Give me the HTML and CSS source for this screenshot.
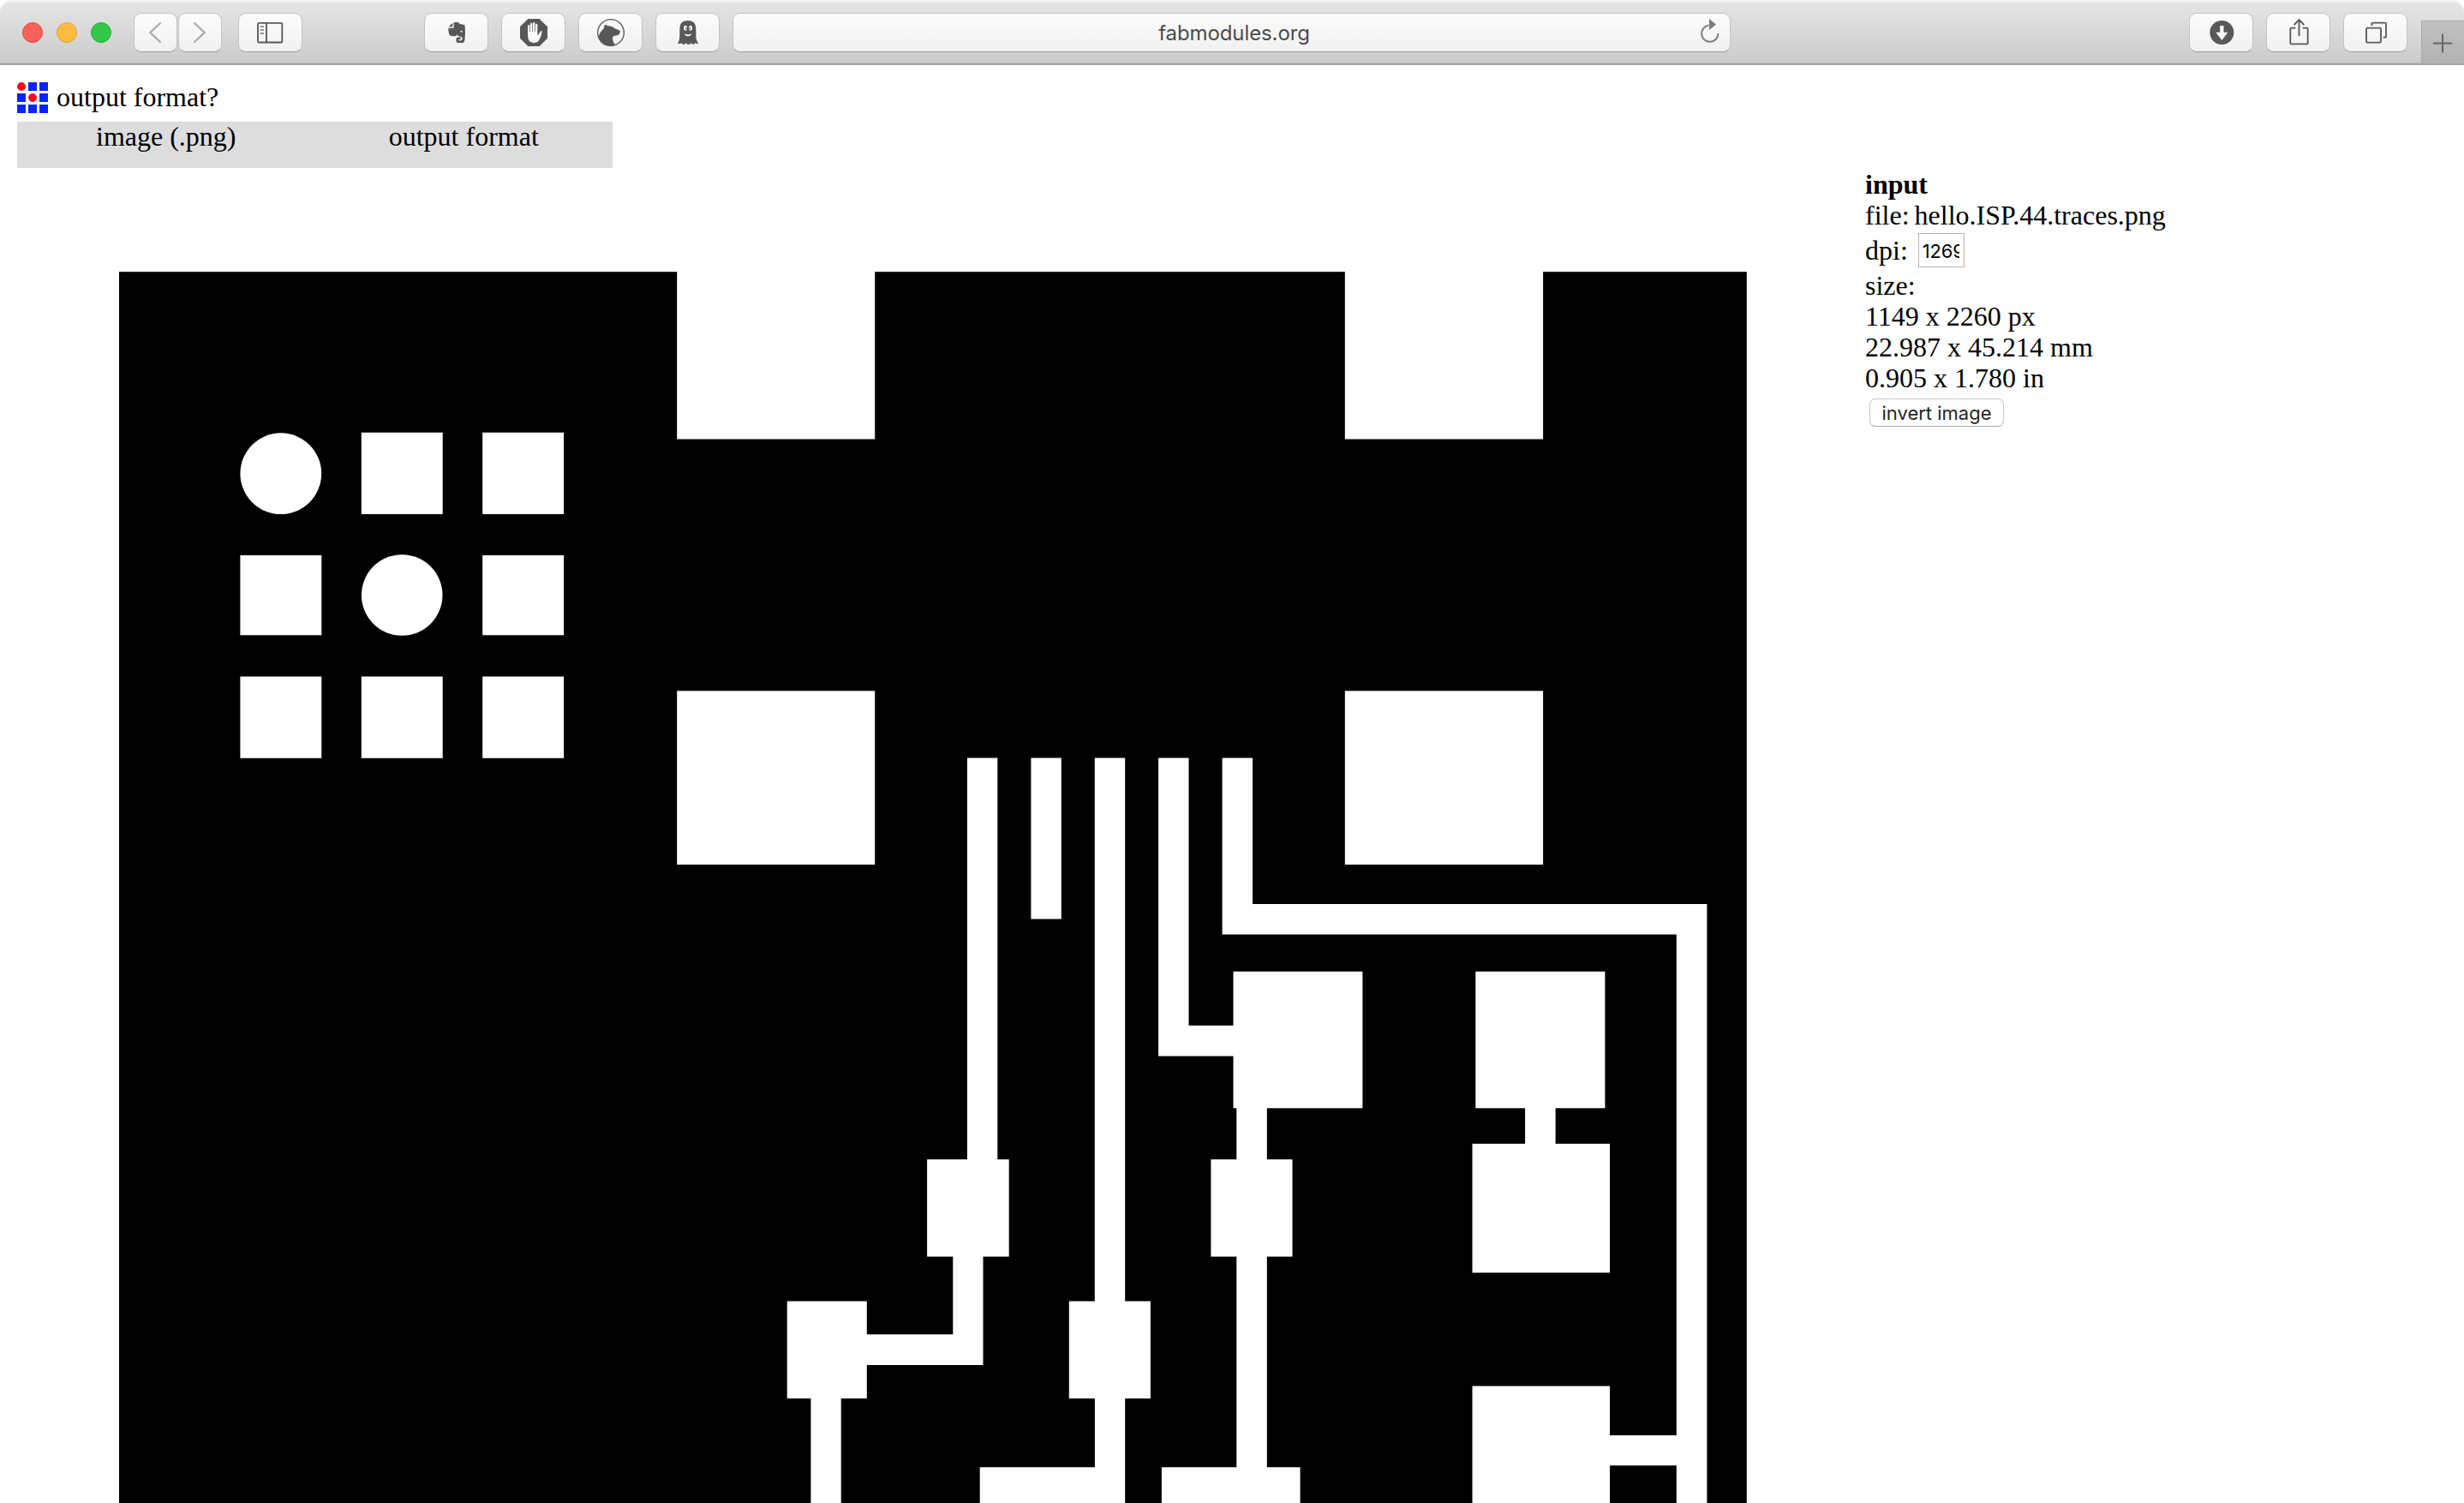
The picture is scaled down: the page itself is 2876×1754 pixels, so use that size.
FILE: index.html
```html
<!DOCTYPE html>
<html lang="en">
<head>
<meta charset="utf-8">
<title>fabmodules.org</title>
<link rel="stylesheet" href="styles.css">
</head>
<body>
<header class="toolbar">
  <div class="lights"><span class="light red"></span><span class="light yellow"></span><span class="light green"></span></div>
  <div class="nav">
    <div class="btn small"><svg viewBox="0 0 150 138"><path class="chev" d="M93 36 58 69l35 33"/></svg></div>
    <div class="btn small"><svg viewBox="0 0 150 138"><path class="chev" d="M57 36l35 33-35 33"/></svg></div>
  </div>
  <div class="btn sidebar"><svg viewBox="0 0 222 138"><g class="line"><rect x="69" y="35.500" width="85" height="68" rx="4"/><path d="M99 35v69"/><path class="thin" d="M77 48h13M77 60h13M77 72h13"/></g></svg></div>
  <div class="extensions">
    <div class="btn"><svg viewBox="0 0 222 138"><path class="fill" d="M97 35v14H83zM101 34q9-3 16 0 4 2 5 5l13 2q5 1 5 6 2 22 0 41-1 17-7 17h-13q-11 0-11-10t11-10h5v8h-5q-3 0-3 2t4 2h6q4-1 4-7 0-6-4-7l-10-2q-4-1-5-5-2 6-7 6-14 0-18-4-5-5-5-25h16q3 0 3-3z"/><path class="paper" d="M123 67q1-7 7-4l2 5q-5-2-9-1z"/></svg></div>
    <div class="btn"><svg viewBox="0 0 222 138"><path class="fill" d="M91 21h40l28 28v40l-28 28H91L63 89V49z"/><path class="paper" d="M90 72V46q0-4 3.500-4t3.500 4v20h2V39q0-4 3.500-4t3.500 4v26h2V37q0-4 3.500-4t3.500 4v28h2V42q0-4 3.500-4t3.500 4v35h3l7-12q3-4 6-1-1 10-5 20-5 14-11 18-6 3-14 3-11 0-16-8-4-8-4-25z"/></svg></div>
    <div class="btn"><svg viewBox="0 0 222 138"><circle class="ring" cx="111" cy="69" r="46"/><path class="fill" d="M67 83q6-17 19-28 2-13 6-14 5 0 8 5 14-2 24 8l19 8q2 8-3 13-7 6-17 5-7 2-6 12 3 14 9 20-18 9-38 0-17-9-21-29z"/></svg></div>
    <div class="btn"><svg viewBox="0 0 222 138"><path class="fill" d="M82 55q0-28 28.500-28T139 55v30q1 14 8 22-5 2-11-2-2 4-6 6-5-1-7-5-5 5-11 5-6-1-8-5-4 5-9 5-5-2-7-5-6 3-13 1 7-9 7-25z"/><ellipse class="paper" cx="102" cy="53" rx="6" ry="9"/><ellipse class="paper" cx="120" cy="53" rx="6" ry="9"/><path class="fill" d="M103 52h4v6h-4zM116 52h4v6h-4z"/><path class="paper" d="M98 73q13 6 26 0-3 9-13 9t-13-9z"/></svg></div>
  </div>
  <div class="address"><span>fabmodules.org</span><svg class="reload" viewBox="0 0 24 30"><path d="M10.500 7.500A9.700 9.700 0 1 0 21.500 17" /><path class="head" d="M11 0v13l8-6.500z"/></svg></div>
  <div class="actions">
    <div class="btn"><svg viewBox="0 0 222 138"><circle class="fill" cx="112" cy="69" r="42"/><path class="paper" d="M105.500 45h13v23H133l-21 28-21-28h14.500z"/></svg></div>
    <div class="btn"><svg viewBox="0 0 222 138"><path class="line" d="M100 53H85q-3 0-3 3v50q0 3 3 3h55q3 0 3-3V56q0-3-3-3h-15M112.500 81V24M95 42l17.500-18L130 42"/></svg></div>
    <div class="btn"><svg viewBox="0 0 222 138"><g class="line"><rect x="78" y="53" width="51" height="51" rx="4"/><path d="M97 45V38q0-3 3-3h44q3 0 3 3v45q0 3-3 3h-7"/></g></svg></div>
  </div>
  <div class="newtab"><svg viewBox="0 0 50 50"><path d="M14 26.500h22M25 15.500v22"/></svg></div>
</header>

<main class="page">
  <div class="prompt">
    <svg class="logo" viewBox="0 0 36 36"><g class="blue"><path d="M13 0h10v10H13zM26 0h10v10H26zM0 13h10v10H0zM26 13h10v10H26zM0 26h10v10H0zM13 26h10v10H13zM26 26h10v10H26z"/></g><g class="dot"><circle cx="5" cy="5" r="5"/><circle cx="18" cy="18" r="5"/></g></svg>
    <span>output format?</span>
  </div>
  <div class="menu"><div>image (.png)</div><div>output format</div></div>
  <div class="work">
    <svg class="board" viewBox="139.100 317 1900 1437">
      <rect x="139.100" y="317.200" width="1899.800" height="1500"/>
      <g class="copper">
        <path d="M790.300 310h231v202.400h-231zM1569.900 310h231.300v202.400h-231.300z"/>
        <circle cx="327.900" cy="552.700" r="47.400"/><circle cx="469.300" cy="694.500" r="47.300"/>
        <path d="M421.900 504.700h94.900v95.200h-94.900zM563.300 504.700h94.900v95.200h-94.900zM280.500 648h94.900v93.300h-94.900zM563.300 648h94.900v93.300h-94.900zM280.500 789.500h94.900v95.200h-94.900zM421.900 789.500h94.900v95.200h-94.900zM563.300 789.500h94.900v95.200h-94.900z"/>
        <path d="M790.300 806.200h231V1009h-231zM1569.900 806.200h231.300V1009h-231.300z"/>
        <path d="M1129 884.500h35.400V1353h13.400v113.400h-30.200v126.500h-135.700v39h-30.100V1760h-35.300v-128.100h-27.700v-113.500h93.100v38.900h100.500v-90.900h-30.200V1353h46.800z"/>
        <path d="M1203.500 884.500h35.400v188.100h-35.400z"/>
        <path d="M1277.900 884.500h35.400v633.900h29.700v113.500h-29.700V1760h-169.500v-47.800H1278v-80.300h-30.100v-113.500h30z"/>
        <path d="M1352.200 884.500h35.400v312.200h52v-63h150.900v159.600h-111.600V1353h29.700v113.400h-29.700v245.800h38.800V1760H1356v-47.800h87.400v-245.800h-29.900V1353h29.900v-59.700h-3.800v-60.800h-87.400z"/>
        <path d="M1426.700 884.500h35.400v170.600h530.400V1760h-35.600v-49.800h-77.800V1760h-160.500v-142.600h160.500v57.500h77.800v-584.500h-530.200z"/>
        <path d="M1722.400 1133.700h151.100v159.600h-57.800v41.400h63.400v150.500h-160.500v-150.500h61.600v-41.400h-57.800z"/>
      </g>
    </svg>
    <section class="info">
      <div class="line-row"><b>input</b></div>
      <div class="line-row file">file: hello.ISP.44.traces.png</div>
      <div class="dpi"><span>dpi:</span><input class="field" type="text" value="1269"></div>
      <div class="line-row">size:</div>
      <div class="line-row">1149 x 2260 px</div>
      <div class="line-row">22.987 x 45.214 mm</div>
      <div class="line-row">0.905 x 1.780 in</div>
      <button class="invert">invert image</button>
    </section>
  </div>
</main>
</body>
</html>
```
FILE: styles.css
```css
* { box-sizing: border-box; }
body {
  margin: 0;
  width: 2876px;
  height: 1754px;
  overflow: hidden;
  background: #fff;
  color: #000;
  font: 32px/36px "Liberation Serif", "Times New Roman", serif;
}
svg { display: block; }

.toolbar {
  height: 76px;
  display: flex;
  align-items: flex-start;
  padding: 15px 0 0 26px;
  background: linear-gradient(#e6e6e6, #cbcbcb);
  border-bottom: 2px solid #a3a3a3;
  border-radius: 14px 14px 0 0;
  box-shadow: inset 0 2px 0 #f4f4f4, inset 0 -1px 0 #bcbcbc;
}
.lights { display: flex; gap: 16px; padding-top: 11px; width: 130px; }
.light { width: 24px; height: 24px; border-radius: 50%; border: 1px solid; }
.red { background: #fc605c; border-color: #e0443f; }
.yellow { background: #fdbc40; border-color: #dea035; }
.green { background: #34c84a; border-color: #27ab36; }
.btn, .address {
  height: 46px;
  background: linear-gradient(#fcfcfc, #f1f1f1);
  border: 1px solid #c3c3c3;
  border-bottom-color: #9b9b9b;
  border-radius: 9px;
}
.btn { width: 75px; }
.btn svg { width: 74px; height: 46px; margin: -1px 0 0 -1px; }
.nav { display: flex; gap: 1px; }
.btn.small { width: 51px; }
.btn.small svg { width: 50px; }
.sidebar { margin-left: 19px; }
.extensions { display: flex; gap: 15px; margin-left: 142px; }
.extensions svg, .actions svg { margin-left: 0; }
.chev { fill: none; stroke: #ababab; stroke-width: 7; stroke-linecap: round; }
.line { fill: none; stroke: #585858; stroke-width: 5.500; }
.thin { stroke-width: 4; stroke: #777; }
.ring { fill: none; stroke: #585858; stroke-width: 4; }
.fill { fill: #585858; }
.paper { fill: #f8f8f8; }
.address {
  width: 1165px;
  margin-left: 15px;
  display: flex;
  align-items: center;
  font: 24px/44px Inter, sans-serif;
  letter-spacing: -0.1px;
  color: #4b4b4b;
}
.address span { flex: 1; text-align: center; padding: 2px 0 0 52px; }
.reload { width: 24px; height: 30px; margin: -3px 11px 0 11px; fill: none; stroke: #7c7c7c; stroke-width: 2; }
.reload .head { fill: #7c7c7c; stroke: none; }
.actions { display: flex; gap: 15px; margin-left: 535px; }
.newtab {
  width: 50px;
  height: 50px;
  margin: 9px 0 0 auto;
  background: linear-gradient(#c0c0c0, #b2b2b2);
  border: solid #ababab;
  border-width: 1px 0 0 1px;
}
.newtab svg { width: 50px; height: 50px; margin: -1px 0 0 -1px; fill: none; stroke: #666; stroke-width: 2; }

.page { padding: 20px 0 0 20px; }
.prompt { display: flex; gap: 10px; height: 46px; }
.prompt span { line-height: 34px; }
.logo { width: 36px; height: 36px; }
.blue { fill: #0b24fb; }
.dot { fill: #fc0d1b; }
.menu {
  width: 695px;
  height: 54px;
  display: grid;
  grid-template-columns: 1fr 1fr;
  background: #ddd;
  text-align: center;
  line-height: 34px;
}
.work { display: flex; align-items: flex-start; padding-left: 119px; }
.board { width: 1900px; height: 1437px; margin-top: 121px; flex: none; }
.copper { fill: #fff; }
.info { margin: 1px 0 0 138px; display: flex; flex-direction: column; white-space: nowrap; }
.file { word-spacing: -2px; }
.dpi { height: 46px; display: flex; align-items: center; line-height: 34px; }
.field {
  width: 54px;
  height: 40px;
  margin: 0 0 0 12px;
  padding: 2px 5px 0 4px;
  border: 1px solid #b5b5b5;
  border-radius: 0;
  background: #fff;
  color: #000;
  font: 22px/36px Inter, sans-serif;
  letter-spacing: -0.2px;
}
.invert {
  width: 157px;
  height: 33px;
  margin: 6px 0 0 5px;
  padding: 0;
  background: #fff;
  border: 1px solid #c8c8c8;
  border-bottom-color: #aaa;
  border-radius: 7px;
  font: 22px/30px Inter, sans-serif;
  color: #262626;
}
```
